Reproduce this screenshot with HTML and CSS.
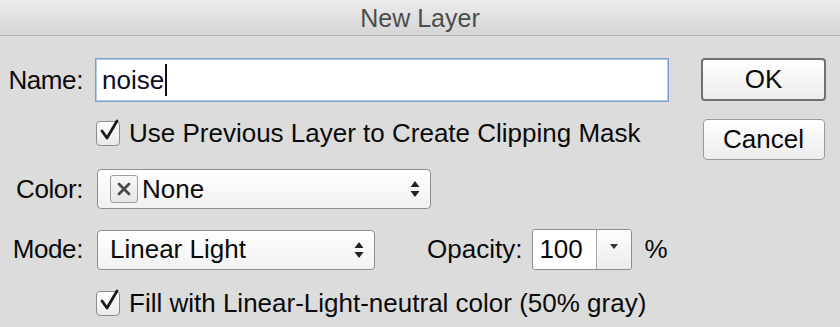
FILE: index.html
```html
<!DOCTYPE html>
<html lang="en">
<head>
  <meta charset="UTF-8">
  <title>New Layer</title>
  <meta name="viewport" content="width=device-width, initial-scale=1.0">
  <link rel="stylesheet" href="styles.css">
</head>
<body>

  <div class="titlebar">New Layer</div>

  <div class="dialog">
    <div class="form">
      <div class="row row-name">
        <label class="label" for="layerName">Name:</label>
        <div class="text-field">noise<span class="caret"></span></div>
      </div>

      <div class="row row-check">
        <span class="checkbox">
          <svg width="24" height="26" viewBox="0 0 24 26"><path d="M5 13 L10 20 L20 3" fill="none" stroke="#1a1a1a" stroke-width="2.8" stroke-linecap="round" stroke-linejoin="round"/></svg>
        </span>
        <span class="check-text">Use Previous Layer to Create Clipping Mask</span>
      </div>

      <div class="row row-color">
        <span class="label">Color:</span>
        <div class="select select-color">
          <span class="swatch">
            <svg width="16" height="16" viewBox="0 0 16 16"><path d="M3 3 L13 13 M13 3 L3 13" stroke="#4a4a4a" stroke-width="2.8" stroke-linecap="round"/></svg>
          </span>
          <span class="select-value">None</span>
          <svg class="arrows" width="10" height="18" viewBox="0 0 10 18"><path d="M5 1 L9.5 7 L0.5 7 Z M0.5 11 L9.5 11 L5 17 Z" fill="#222"/></svg>
        </div>
      </div>

      <div class="row row-mode">
        <span class="label">Mode:</span>
        <div class="select select-mode">
          <span class="select-value">Linear Light</span>
          <svg class="arrows" width="10" height="18" viewBox="0 0 10 18"><path d="M5 1 L9.5 7 L0.5 7 Z M0.5 11 L9.5 11 L5 17 Z" fill="#222"/></svg>
        </div>
        <span class="opacity-label">Opacity:</span>
        <div class="combo">
          <span class="combo-value">100</span>
          <span class="combo-btn">
            <svg width="8" height="5" viewBox="0 0 8 5"><path d="M0 0 L8 0 L4 5 Z" fill="#333"/></svg>
          </span>
        </div>
        <span class="percent">%</span>
      </div>

      <div class="row row-check row-fill">
        <span class="checkbox">
          <svg width="24" height="26" viewBox="0 0 24 26"><path d="M5 13 L10 20 L20 3" fill="none" stroke="#1a1a1a" stroke-width="2.8" stroke-linecap="round" stroke-linejoin="round"/></svg>
        </span>
        <span class="check-text">Fill with Linear-Light-neutral color (50% gray)</span>
      </div>
    </div>

    <div class="actions">
      <button class="btn btn-default">OK</button>
      <button class="btn">Cancel</button>
    </div>
  </div>

</body>
</html>
```

FILE: styles.css
```css
body {
  margin: 0;
  width: 840px;
  height: 327px;
  overflow: hidden;
  background: #dcdcdc;
  font-family: "Liberation Sans", Arial, sans-serif;
  font-size: 26px;
  color: #0a0a0a;
}
.titlebar {
  height: 35px;
  border-bottom: 1px solid #b3b3b3;
  background: linear-gradient(#ececec, #d5d5d5);
  text-align: center;
  font-size: 25px;
  line-height: 36px;
  color: #4c4c4c;
}
.dialog {
  display: flex;
  padding-top: 22px;
}
.form {
  width: 669px;
}
.row {
  display: flex;
  align-items: center;
}
.label {
  width: 83px;
  text-align: right;
  margin-right: 12px;
  flex: none;
  letter-spacing: -0.4px;
}
.row-name {
  height: 44px;
  margin-bottom: 19px;
}
.text-field {
  flex: 1;
  box-sizing: border-box;
  height: 44px;
  border: 1px solid #7f9ccc;
  box-shadow: inset 0 0 0 1px #b4cbea;
  background: #fff;
  padding-left: 6px;
  display: flex;
  align-items: center;
  color: #0c0c2a;
}
.caret {
  display: inline-block;
  width: 2px;
  height: 32px;
  background: #111;
  margin-left: 1px;
}
.row-check {
  height: 25px;
  padding-left: 96px;
  margin-bottom: 23px;
}
.row-fill {
  margin-bottom: 0;
}
.checkbox {
  width: 24px;
  height: 25px;
  box-sizing: border-box;
  border: 1px solid #8c8c8c;
  border-radius: 4px;
  background: linear-gradient(#ffffff, #e9e9e9);
  margin-right: 9px;
  flex: none;
  position: relative;
}
.checkbox svg {
  position: absolute;
  left: 0;
  top: -4px;
}
.check-text {
  white-space: nowrap;
}
.row-color {
  height: 40px;
  margin-bottom: 20px;
}
.row-mode {
  height: 41px;
  margin-bottom: 21px;
}
.select {
  height: 40px;
  box-sizing: border-box;
  border: 1px solid #8e8e8e;
  border-radius: 4px;
  background: linear-gradient(#ffffff, #f1f1f1);
  margin-left: 2px;
  display: flex;
  align-items: center;
}
.select-color {
  width: 334px;
  padding-left: 12px;
}
.select-mode {
  width: 278px;
  padding-left: 12px;
}
.swatch {
  width: 28px;
  height: 28px;
  box-sizing: border-box;
  border: 1px solid #9d9d9d;
  border-radius: 3px;
  background: linear-gradient(#f7f7f7, #e6e6e6);
  display: flex;
  align-items: center;
  justify-content: center;
  margin-right: 4px;
}
.select-value {
  flex: 1;
}
.arrows {
  margin-right: 10px;
}
.opacity-label {
  margin-left: 52px;
  margin-right: 10px;
}
.combo {
  width: 100px;
  height: 41px;
  box-sizing: border-box;
  border: 1px solid #8e8e8e;
  border-radius: 3px;
  display: flex;
  overflow: hidden;
}
.combo-value {
  width: 57px;
  background: #fff;
  padding-left: 6px;
  display: flex;
  align-items: center;
  border-right: 1px solid #a5a5a5;
}
.combo-btn {
  flex: 1;
  background: linear-gradient(#fdfdfd, #ececec);
  display: flex;
  justify-content: center;
  padding-top: 14px;
  box-sizing: border-box;
}
.percent {
  margin-left: 12px;
}
.actions {
  display: flex;
  flex-direction: column;
  align-items: center;
  width: 125px;
  margin-left: 32px;
}
.btn {
  font-family: "Liberation Sans", Arial, sans-serif;
  font-size: 26px;
  color: #0a0a0a;
  width: 122px;
  height: 41px;
  border: 1px solid #9b9b9b;
  border-radius: 4px;
  background: linear-gradient(#ffffff, #ececec);
  padding: 0;
  margin-bottom: 18px;
}
.btn-default {
  width: 125px;
  height: 43px;
  border: 2px solid #707070;
}
```
